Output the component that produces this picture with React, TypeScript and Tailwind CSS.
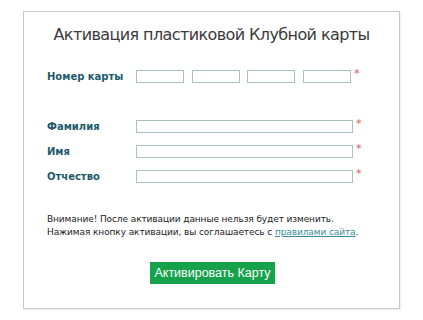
import React from "react";

const Star = () => (
  <span className="ml-[3px] self-start -mt-[2px] text-[11px] leading-[12px] text-[#cf5a5a]">*</span>
);

const inputCls = "h-[13px] border border-[#a8c2bf] bg-white";

export default function App() {
  return (
    <div className="w-[423px] h-[320px] bg-white pt-[11px] pl-[23px]" style={{ fontFamily: '"DejaVu Sans", Verdana, sans-serif' }}>
      <div className="w-[377px] h-[298px] border border-[#c9c9c9] shadow-[1px_1px_2px_rgba(0,0,0,0.08)] flex flex-col">
        <div className="mt-[12px] h-[22px] leading-[22px] text-[16px] tracking-[-0.6px] text-[#3a3a3a] text-center whitespace-nowrap">
          Активация пластиковой Клубной карты
        </div>

        <div className="mt-[24px] pl-[23px] flex items-center h-[13px]">
          <div className="w-[89px] text-[10px] font-bold text-[#1d5a68] leading-[13px] whitespace-nowrap">Номер карты</div>
          <div className="flex gap-[7.7px]">
            <div className={`${inputCls} w-[48px]`} />
            <div className={`${inputCls} w-[48px]`} />
            <div className={`${inputCls} w-[48px]`} />
            <div className={`${inputCls} w-[48px]`} />
          </div>
          <Star />
        </div>

        <div className="mt-[37px] flex flex-col gap-[12px] pl-[23px]">
          {["Фамилия", "Имя", "Отчество"].map((l) => (
            <div key={l} className="flex items-center h-[13px]">
              <div className="w-[89px] text-[10px] font-bold text-[#1d5a68] leading-[13px]">{l}</div>
              <div className={`${inputCls} w-[217px]`} />
              <Star />
            </div>
          ))}
        </div>

        <div className="mt-[30px] pl-[23px] text-[9px] tracking-[-0.1px] leading-[13px] text-[#222] whitespace-nowrap">
          <div>Внимание! После активации данные нельзя будет изменить.</div>
          <div>
            Нажимая кнопку активации, вы соглашаетесь с{" "}
            <span className="text-[#3a8b9b] underline">правилами сайта</span>.
          </div>
        </div>

        <div className="mt-[23px] flex justify-center">
          <div
            className="ml-[2px] w-[125px] h-[22px] bg-[#16a14b] text-white text-[12.5px] leading-[22px] text-center whitespace-nowrap"
            style={{ fontFamily: '"Liberation Sans", Arial, sans-serif' }}
          >
            Активировать Карту
          </div>
        </div>
      </div>
    </div>
  );
}
